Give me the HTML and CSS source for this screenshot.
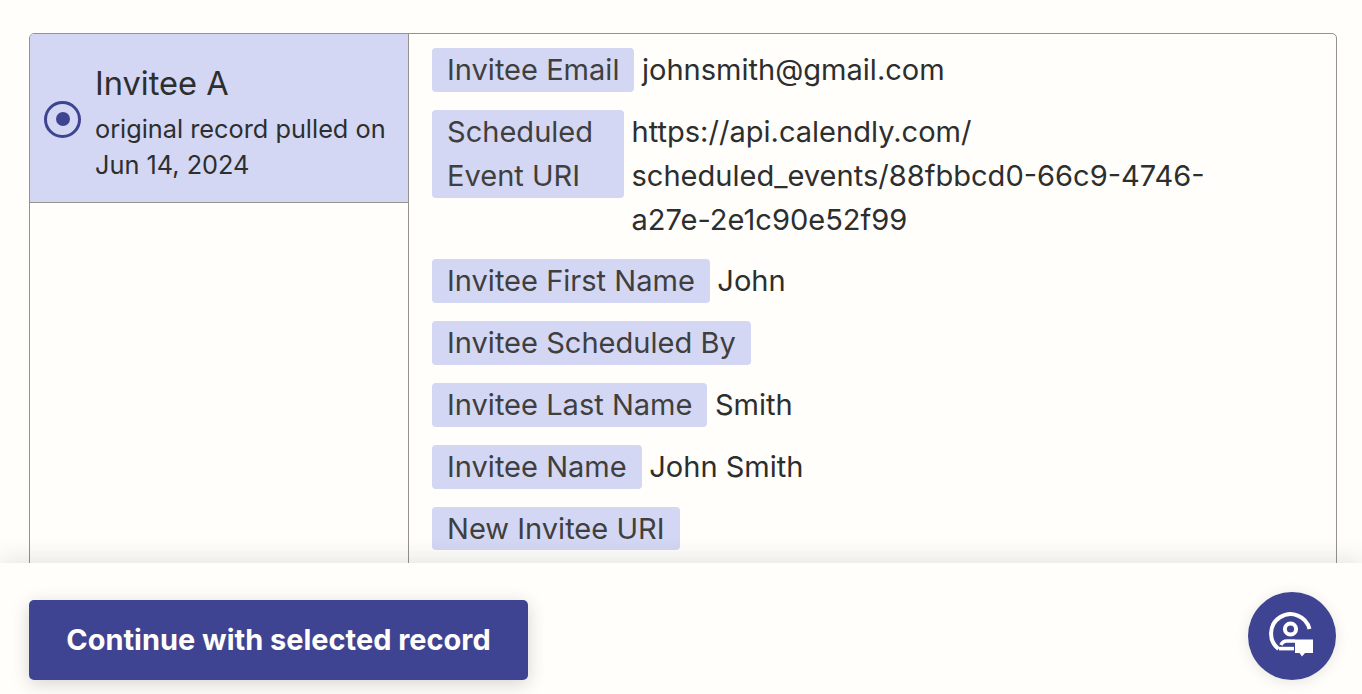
FILE: index.html
```html
<!DOCTYPE html>
<html lang="en">
<head>
    <meta charset="UTF-8">
    <meta name="viewport" content="width=device-width, initial-scale=1.0">
    <title>Select a record</title>
    <link rel="stylesheet" href="styles.css">
</head>
<body>
    <main class="content">
        <div class="record-box">
            <div class="record-list">
                <div class="record-item">
                    <span class="radio"><span class="radio-dot"></span></span>
                    <div class="record-text">
                        <div class="record-title">Invitee A</div>
                        <div class="record-sub">original record pulled on<br>Jun 14, 2024</div>
                    </div>
                </div>
            </div>
            <div class="record-fields">
                <div class="field"><span class="tag">Invitee Email</span><span class="value">johnsmith@gmail.com</span></div>
                <div class="field"><span class="tag tag-wrapped">Scheduled<br>Event URI</span><span class="value">https://api.calendly.com/<br>scheduled_events/88fbbcd0-66c9-4746-<br>a27e-2e1c90e52f99</span></div>
                <div class="field"><span class="tag">Invitee First Name</span><span class="value">John</span></div>
                <div class="field"><span class="tag">Invitee Scheduled By</span></div>
                <div class="field"><span class="tag">Invitee Last Name</span><span class="value">Smith</span></div>
                <div class="field"><span class="tag">Invitee Name</span><span class="value">John Smith</span></div>
                <div class="field"><span class="tag">New Invitee URI</span></div>
            </div>
        </div>
    </main>
    <footer class="footer">
        <button class="continue-btn" type="button">Continue with selected record</button>
        <button class="help-btn" type="button" aria-label="Help">
            <svg width="48" height="48" viewBox="0 0 48 48" fill="none">
                <path d="M41.5 17A19.5 19.5 0 1 0 10.5 37" stroke="#fff" stroke-width="4"/>
                <circle cx="22.5" cy="17" r="5.6" stroke="#fff" stroke-width="4"/>
                <path d="M13 33C14 30.5 16.5 29 19 29H27" stroke="#fff" stroke-width="3.6"/>
                <path d="M11 36.6H26" stroke="#fff" stroke-width="3.6"/>
                <path d="M27 27.5H45V41H37L34 44.5L31.5 41H27Z" fill="#fff"/>
            </svg>
        </button>
    </footer>
</body>
</html>
```

FILE: styles.css
```css
* {
    box-sizing: border-box;
}
html, body {
    height: 100%;
}
body {
    margin: 0;
    height: 694px;
    overflow: hidden;
    display: flex;
    flex-direction: column;
    background-color: #fffefb;
    color: #2d2e2e;
    font-family: Inter, "Liberation Sans", sans-serif;
}
.content {
    flex: 1;
    min-height: 0;
    overflow: hidden;
    padding: 33px 25px 0 29px;
}
.record-box {
    display: flex;
    height: 700px;
    border: 1px solid #95928e;
    border-radius: 5px;
    overflow: hidden;
}
.record-list {
    width: 379px;
    flex-shrink: 0;
    border-right: 1px solid #95928e;
}
.record-item {
    display: flex;
    align-items: center;
    height: 169px;
    padding: 2px 0 0 14px;
    background-color: #d3d7f4;
    border-bottom: 1px solid #95928e;
}
.radio {
    width: 37px;
    height: 37px;
    flex-shrink: 0;
    display: flex;
    align-items: center;
    justify-content: center;
    border: 3px solid #3f4492;
    border-radius: 50%;
    margin-right: 14px;
}
.radio-dot {
    width: 14px;
    height: 14px;
    border-radius: 50%;
    background-color: #3f4492;
}
.record-text {
    padding-top: 7px;
}
.record-title {
    font-size: 32.6px;
    line-height: 40px;
    margin-bottom: 8px;
}
.record-sub {
    font-size: 25.3px;
    line-height: 36px;
}
.record-fields {
    flex: 1;
    padding: 14.2px 23px;
}
.field {
    display: flex;
    align-items: flex-start;
    margin-bottom: 18px;
    font-size: 29.05px;
    line-height: 43.8px;
}
.tag {
    flex-shrink: 0;
    padding: 0 15px;
    background-color: #d3d7f4;
    border-radius: 4px;
    color: #403f3e;
}
.tag-wrapped {
    width: 192px;
}
.value {
    margin-left: 7.5px;
}
.footer {
    flex-shrink: 0;
    position: relative;
    height: 131px;
    padding: 37px 26px 14px 29px;
    display: flex;
    justify-content: space-between;
    align-items: flex-start;
    background-color: #fffefb;
    box-shadow: 0 -4px 22px rgba(45, 46, 46, 0.12);
}
.continue-btn {
    width: 499px;
    height: 80px;
    padding-bottom: 3px;
    border: none;
    border-radius: 5px;
    background-color: #3f4492;
    color: #fffefb;
    font-family: inherit;
    font-size: 28.95px;
    font-weight: 700;
    cursor: pointer;
    box-shadow: 0 4px 18px rgba(45, 46, 46, 0.2);
}
.help-btn {
    position: absolute;
    right: 26px;
    top: 29px;
    width: 88px;
    height: 88px;
    padding: 0;
    border: none;
    border-radius: 50%;
    background-color: #3f4492;
    display: flex;
    align-items: center;
    justify-content: center;
    cursor: pointer;
    box-shadow: 0 2px 14px rgba(45, 46, 46, 0.12);
}
```
